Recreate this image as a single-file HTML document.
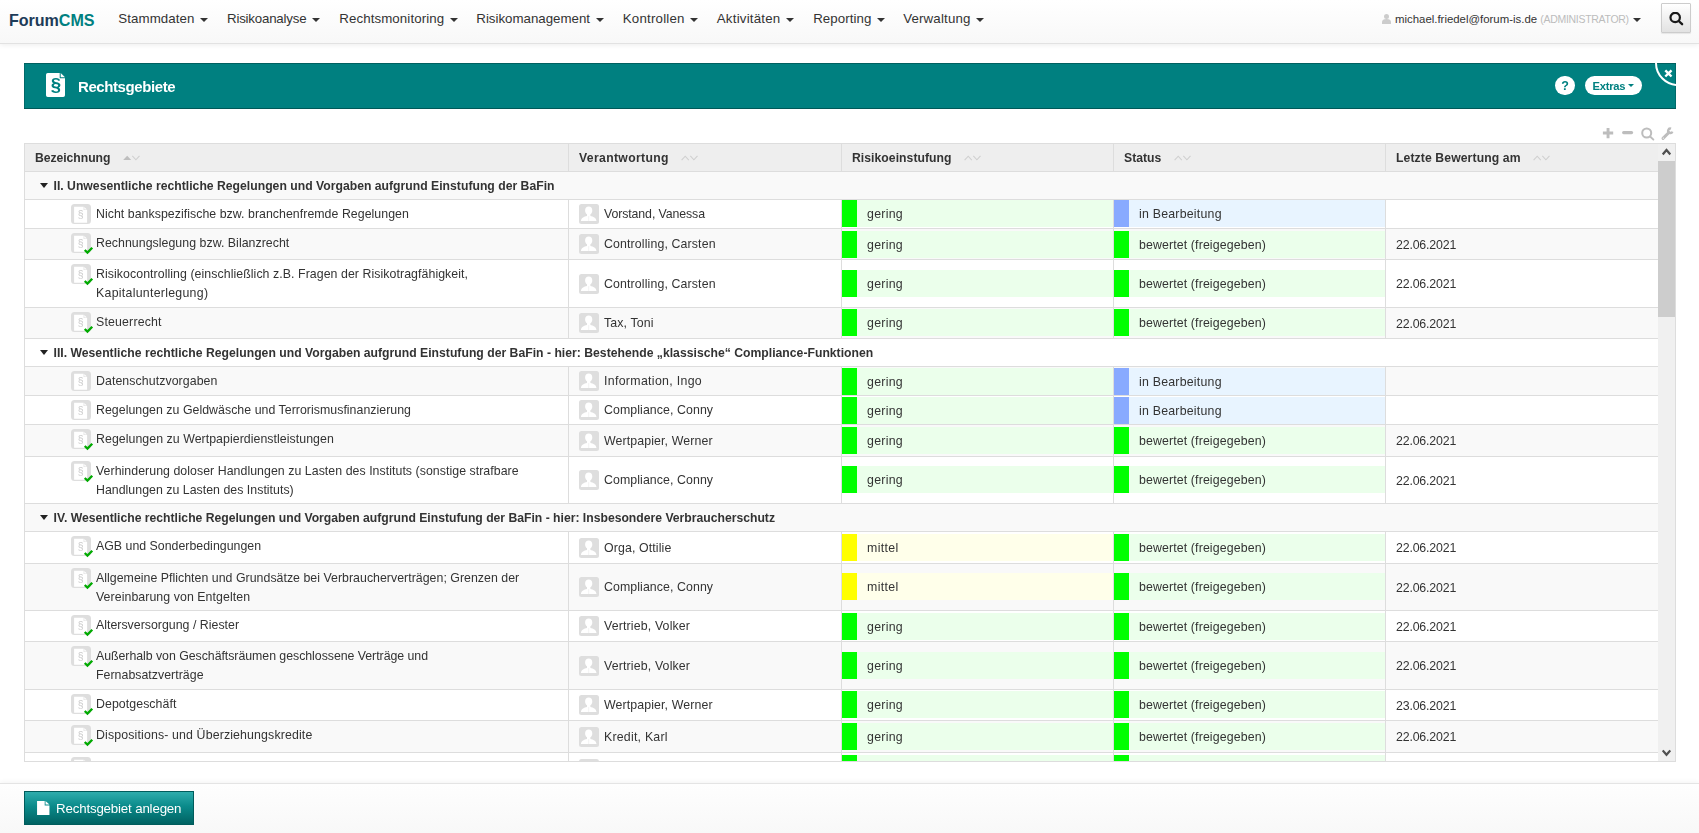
<!DOCTYPE html><html lang="de"><head><meta charset="utf-8"><title>ForumCMS - Rechtsgebiete</title><style>

html,body{margin:0;padding:0}
body{width:1699px;height:833px;overflow:hidden;background:#fff;position:relative;font-family:"Liberation Sans", sans-serif;font-size:12.35px;color:#333}
*{box-sizing:border-box}
.t{white-space:nowrap;display:inline-block}
.n{font-size:12.35px}
.b{font-size:12.2px;font-weight:bold}
.nav{font-size:13.3px}
#navbar{position:absolute;left:0;top:0;width:1699px;height:44px;background:linear-gradient(#ffffff,#f8f8f8);border-bottom:1px solid #e2e2e2;box-shadow:0 1px 5px rgba(0,0,0,.075)}
#brand{position:absolute;left:9px;top:8.5px;font-size:16.1px;letter-spacing:-0.05px;font-weight:bold;line-height:22px;white-space:nowrap}
#brand .bf{color:#1d3b59} #brand .bc{color:#008080}
.ni{position:absolute;top:9px;line-height:19px;white-space:nowrap;color:#333}
.caret{position:absolute;width:0;height:0;border-left:4px solid transparent;border-right:4px solid transparent;border-top:4px solid #333}
#user{position:absolute;top:11px;left:1395px;font-size:11.4px;line-height:16px;white-space:nowrap}
#user .adm{color:#bcbcbc;font-size:10.5px}
#sbtn{position:absolute;left:1661px;top:3px;width:30px;height:30px;border:1px solid #ccc;border-radius:1px;background:linear-gradient(#fff,#e2e2e2);box-shadow:0 1px 1px rgba(0,0,0,.08)}
#panel,#table,#footer{will-change:transform}
#panel{position:absolute;left:24px;top:63px;width:1652px;height:46px;background:#008080;overflow:hidden;box-shadow:inset 0 -1px 0 #005858,inset 0 1px 0 #006060,inset 1px 0 0 #006a6a,inset -1px 0 0 #006a6a}
#ptitle{position:absolute;left:54px;top:12.6px;color:#fff;font-weight:bold;font-size:15px;line-height:22px;white-space:nowrap}
#table{position:absolute;left:24px;top:143px;width:1652px;height:619px;border:1px solid #ddd;overflow:hidden;background:#fff}
.row{position:absolute;left:0;width:1633px;border-bottom:1px solid #ddd}
.odd{background:#f9f9f9}
.hd{background:#eee}
.c{position:absolute;top:0;bottom:0;border-right:1px solid #ddd}
.c1{left:0;width:544px} .c2{left:544px;width:273px} .c3{left:817px;width:272px} .c4{left:1089px;width:272px} .c5{left:1361px;width:272px;border-right:0}
.mid{display:flex;align-items:center}
.ic{position:absolute;left:46.3px;top:4px}
.ck{position:absolute;left:58px;top:16px}
.l{position:absolute;left:71px;line-height:16px}
.av{position:absolute;left:10px;top:50%;margin-top:-10px}
.nm{position:absolute;left:35px;top:50%;margin-top:-8px;line-height:16px}
.blk{position:absolute;left:0;right:0;height:27px}
.blk i{position:absolute;left:0;top:0;width:15px;height:27px}
.blk .t{position:absolute;left:25px;top:5.5px;line-height:16px}
.gr{background:#ebffeb} .gr i{background:#00ff00}
.ye{background:#ffffea} .ye i{background:#ffff00}
.bl{background:#e8f4ff} .bl i{background:#88aaff}
.dt{position:absolute;left:10px;top:50%;margin-top:-7.5px;line-height:16px}
.ht{position:absolute;left:10px;top:6px;line-height:16px}
.gt{position:absolute;left:28.5px;top:6.2px;line-height:16px}
.gc{position:absolute;left:15px;top:11.4px;width:0;height:0;border-left:4px solid transparent;border-right:4px solid transparent;border-top:5px solid #222}
.so{position:absolute;top:11px}
#sb{position:absolute;left:1633px;top:0;width:17px;height:617px;background:#f0f0f0}
#sb .th{position:absolute;left:0;top:17px;width:17px;height:156px;background:#cdcdcd}
#footer{position:absolute;left:0;top:783px;width:1699px;height:50px;border-top:1px solid #e4e4e4;background:linear-gradient(#fefefe,#f8f8f8);box-shadow:0 -1px 5px rgba(0,0,0,.05)}
#btn{position:absolute;left:24px;top:7px;width:170px;height:34px;border:1px solid #005c5c;background:linear-gradient(#2eacac,#0a8a8a 45%,#006262);color:#fff;font-size:13.3px;line-height:34px;white-space:nowrap}

</style></head><body>
<div id="navbar">
<div id="brand"><span class="bf">Forum</span><span class="bc">CMS</span></div>
<div class="ni" style="left:118.3px"><span class="t nav" style="letter-spacing:0.090px;">Stammdaten</span></div>
<div class="caret" style="left:200.0px;top:18px"></div>
<div class="ni" style="left:227.0px"><span class="t nav" style="letter-spacing:-0.204px;">Risikoanalyse</span></div>
<div class="caret" style="left:312.1px;top:18px"></div>
<div class="ni" style="left:339.2px"><span class="t nav" style="letter-spacing:0.102px;">Rechtsmonitoring</span></div>
<div class="caret" style="left:449.7px;top:18px"></div>
<div class="ni" style="left:476.3px"><span class="t nav" style="letter-spacing:-0.009px;">Risikomanagement</span></div>
<div class="caret" style="left:595.5px;top:18px"></div>
<div class="ni" style="left:622.8px"><span class="t nav" style="letter-spacing:0.203px;">Kontrollen</span></div>
<div class="caret" style="left:690.0px;top:18px"></div>
<div class="ni" style="left:716.8px"><span class="t nav" style="letter-spacing:0.206px;">Aktivitäten</span></div>
<div class="caret" style="left:785.7px;top:18px"></div>
<div class="ni" style="left:813.2px"><span class="t nav" style="letter-spacing:0.068px;">Reporting</span></div>
<div class="caret" style="left:876.9px;top:18px"></div>
<div class="ni" style="left:903.2px"><span class="t nav" style="letter-spacing:0.156px;">Verwaltung</span></div>
<div class="caret" style="left:975.9px;top:18px"></div>
<svg style="position:absolute;left:1382px;top:14px" width="9" height="10" viewBox="0 0 9 10"><circle cx="4.5" cy="2.6" r="2.5" fill="#ccc"/><path d="M0 10v-2.2c0-1.8 1.6-2.9 4.5-2.9s4.5 1.1 4.5 2.9v2.2z" fill="#ccc"/></svg>
<div id="user"><span class="t em" style="letter-spacing:0.004px;">michael.friedel@forum-is.de</span> <span class="adm"><span class="t em" style="letter-spacing:-0.297px;">(ADMINISTRATOR)</span></span></div>
<div class="caret" style="left:1633px;top:18px"></div>
<div id="sbtn"><svg style="position:absolute;left:7px;top:8px" width="15" height="15" viewBox="0 0 15 15"><circle cx="6.2" cy="5.5" r="4.7" fill="none" stroke="#1a1a1a" stroke-width="2.2"/><path d="M9.7 9l3.4 3.2" stroke="#1a1a1a" stroke-width="2.4" stroke-linecap="round"/></svg></div>
</div>
<div id="panel">
<svg style="position:absolute;left:22px;top:10px" width="19" height="24" viewBox="0 0 19 24"><path d="M1.8 0h11.9v5.2h5.3v17a1.8 1.8 0 0 1-1.8 1.8h-15.4a1.8 1.8 0 0 1-1.8-1.8v-20.4a1.8 1.8 0 0 1 1.8-1.8z" fill="#fff"/><path d="M14.7 0v4.3h4.3z" fill="#fff"/><text x="10" y="17.8" font-family="Liberation Sans" font-weight="bold" font-size="18.6" text-anchor="middle" fill="#008080">§</text></svg>
<div id="ptitle"><span class="t pt" style="letter-spacing:-0.412px;">Rechtsgebiete</span></div>
<div style="position:absolute;left:1531px;top:13px;width:20px;height:19px;padding-top:1px;border-radius:10px;background:#fff;color:#008080;font-weight:bold;font-size:12.5px;line-height:19.5px;text-align:center">?</div>
<div style="position:absolute;left:1561px;top:13px;width:57px;height:19px;border-radius:9.5px;background:#fff;color:#008080;font-weight:bold;font-size:11.2px;line-height:20px;padding-left:7.6px;white-space:nowrap"><span class="t ex" style="letter-spacing:-0.284px;">Extras</span></div>
<div class="caret" style="left:1603.8px;top:21.4px;border-top-color:#008080;border-left-width:3.6px;border-right-width:3.6px;border-top-width:3.6px"></div>
<div style="position:absolute;left:1631px;top:-23px;width:46px;height:46px;border-radius:23px;border:2px solid #fff;"></div>
<svg style="position:absolute;left:1639.5px;top:6.3px" width="9" height="9" viewBox="0 0 9 9"><path d="M1.3 1.3l6.2 6.2M7.5 1.3l-6.2 6.2" stroke="#fff" stroke-width="2.4"/></svg>
</div>
<svg style="position:absolute;left:1602px;top:127px" width="74" height="14" viewBox="0 0 74 14"><path d="M0.9 6h10.3M6.05 0.9v10.3" stroke="#bdbdbd" stroke-width="2.9"/><path d="M21.6 5.6h8" stroke="#bdbdbd" stroke-width="3.1" stroke-linecap="round"/><circle cx="44.7" cy="6" r="4.5" fill="none" stroke="#bdbdbd" stroke-width="2"/><path d="M48.1 9.5l3.3 3.1" stroke="#bdbdbd" stroke-width="1.9" stroke-linecap="round"/><path d="M61 11.4l5.9-5.9" stroke="#bdbdbd" stroke-width="3" stroke-linecap="round"/><path d="M70.4 4.6A2.2 2.2 0 1 1 69.05 1.7" fill="none" stroke="#bdbdbd" stroke-width="2.4"/><circle cx="61.3" cy="11.1" r=".6" fill="#fff"/></svg>
<div id="table">
<div class="row hd" style="top:0;height:28px">
<div class="c c1"><div class="ht"><span class="t b" style="letter-spacing:-0.044px;">Bezeichnung</span></div><svg class="so" style="left:97.9px" width="17" height="6" viewBox="0 0 17 6"><path d="M0.2 5.1l4-4.4l4 4.4z" fill="#bebebe"/><path d="M9.3 0.8l3.6 4l3.6-4" fill="none" stroke="#d0d0d0" stroke-width="1.1"/></svg></div>
<div class="c c2"><div class="ht"><span class="t b" style="letter-spacing:0.348px;">Verantwortung</span></div><svg class="so" style="left:112.0px" width="17" height="6" viewBox="0 0 17 6"><path d="M0.6 5.2l3.6-4l3.6 4M9.3 0.8l3.6 4l3.6-4" fill="none" stroke="#d0d0d0" stroke-width="1.1"/></svg></div>
<div class="c c3"><div class="ht"><span class="t b" style="letter-spacing:0.043px;">Risikoeinstufung</span></div><svg class="so" style="left:122.0px" width="17" height="6" viewBox="0 0 17 6"><path d="M0.6 5.2l3.6-4l3.6 4M9.3 0.8l3.6 4l3.6-4" fill="none" stroke="#d0d0d0" stroke-width="1.1"/></svg></div>
<div class="c c4"><div class="ht"><span class="t b" style="letter-spacing:0.000px;">Status</span></div><svg class="so" style="left:59.8px" width="17" height="6" viewBox="0 0 17 6"><path d="M0.6 5.2l3.6-4l3.6 4M9.3 0.8l3.6 4l3.6-4" fill="none" stroke="#d0d0d0" stroke-width="1.1"/></svg></div>
<div class="c c5"><div class="ht"><span class="t b" style="letter-spacing:0.107px;">Letzte Bewertung am</span></div><svg class="so" style="left:147.0px" width="17" height="6" viewBox="0 0 17 6"><path d="M0.6 5.2l3.6-4l3.6 4M9.3 0.8l3.6 4l3.6-4" fill="none" stroke="#d0d0d0" stroke-width="1.1"/></svg></div>
</div>
<div class="row odd" style="top:28px;height:28px"><div class="gc"></div><div class="gt"><span class="t b" style="letter-spacing:0.010px;">II. Unwesentliche rechtliche Regelungen und Vorgaben aufgrund Einstufung der BaFin</span></div></div>
<div class="row" style="top:56px;height:29px">
<div class="c c1"><svg class="ic" width="20" height="20" viewBox="0 0 20 20"><rect width="20" height="20" rx="3.5" fill="#dedede"/><path d="M3.1 2.7h9.5v3.4h3.5v12.6h-13z" fill="#fff"/><path d="M13.3 2.9l2.6 2.5h-2.6z" fill="#fff"/><text x="9.6" y="13.5" font-family="Liberation Sans" font-size="10.4" text-anchor="middle" fill="#cbcbcb">§</text></svg>
<div class="l" style="top:5.6px"><span class="t n" style="letter-spacing:0.039px;">Nicht bankspezifische bzw. branchenfremde Regelungen</span></div>
</div>
<div class="c c2"><svg class="av" width="20" height="20" viewBox="0 0 20 20"><rect width="20" height="20" rx="2.5" fill="#dedede"/><path d="M9.7 2.6c2.2 0 3.6 1.6 3.6 3.8c0 1.6-.8 3.1-1.9 3.9v1.6c2.8.7 5.6 1.4 6.1 5.1h-15.6c.5-3.7 3.3-4.4 6.1-5.1v-1.6c-1.1-.8-1.9-2.3-1.9-3.9c0-2.2 1.4-3.8 3.6-3.8z" fill="#fff"/><path d="M9.7 12.2v4.8" stroke="#efefef" stroke-width=".8"/></svg><div class="nm"><span class="t n" style="letter-spacing:-0.106px;">Vorstand, Vanessa</span></div></div>
<div class="c c3"><div class="blk gr" style="top:0px"><i></i><span class="t n" style="letter-spacing:0.284px;">gering</span></div></div>
<div class="c c4"><div class="blk bl" style="top:0px"><i></i><span class="t n" style="letter-spacing:0.222px;">in Bearbeitung</span></div></div>
<div class="c c5"></div>
</div>
<div class="row odd" style="top:85px;height:31px">
<div class="c c1"><svg class="ic" width="20" height="20" viewBox="0 0 20 20"><rect width="20" height="20" rx="3.5" fill="#dedede"/><path d="M3.1 2.7h9.5v3.4h3.5v12.6h-13z" fill="#fff"/><path d="M13.3 2.9l2.6 2.5h-2.6z" fill="#fff"/><text x="9.6" y="13.5" font-family="Liberation Sans" font-size="10.4" text-anchor="middle" fill="#cbcbcb">§</text></svg><svg class="ck" width="12" height="10" viewBox="0 0 12 10"><path d="M1.75 5.0L4.45 7.6L9.25 2.8" fill="none" stroke="#0a0" stroke-width="2.3" stroke-linecap="butt" stroke-linejoin="miter"/></svg>
<div class="l" style="top:5.6px"><span class="t n" style="letter-spacing:0.037px;">Rechnungslegung bzw. Bilanzrecht</span></div>
</div>
<div class="c c2"><svg class="av" width="20" height="20" viewBox="0 0 20 20"><rect width="20" height="20" rx="2.5" fill="#dedede"/><path d="M9.7 2.6c2.2 0 3.6 1.6 3.6 3.8c0 1.6-.8 3.1-1.9 3.9v1.6c2.8.7 5.6 1.4 6.1 5.1h-15.6c.5-3.7 3.3-4.4 6.1-5.1v-1.6c-1.1-.8-1.9-2.3-1.9-3.9c0-2.2 1.4-3.8 3.6-3.8z" fill="#fff"/><path d="M9.7 12.2v4.8" stroke="#efefef" stroke-width=".8"/></svg><div class="nm"><span class="t n" style="letter-spacing:0.127px;">Controlling, Carsten</span></div></div>
<div class="c c3"><div class="blk gr" style="top:2px"><i></i><span class="t n" style="letter-spacing:0.284px;">gering</span></div></div>
<div class="c c4"><div class="blk gr" style="top:2px"><i></i><span class="t n" style="letter-spacing:0.121px;">bewertet (freigegeben)</span></div></div>
<div class="c c5"><div class="dt"><span class="t n" style="letter-spacing:-0.170px;">22.06.2021</span></div></div>
</div>
<div class="row" style="top:116px;height:48px">
<div class="c c1"><svg class="ic" width="20" height="20" viewBox="0 0 20 20"><rect width="20" height="20" rx="3.5" fill="#dedede"/><path d="M3.1 2.7h9.5v3.4h3.5v12.6h-13z" fill="#fff"/><path d="M13.3 2.9l2.6 2.5h-2.6z" fill="#fff"/><text x="9.6" y="13.5" font-family="Liberation Sans" font-size="10.4" text-anchor="middle" fill="#cbcbcb">§</text></svg><svg class="ck" width="12" height="10" viewBox="0 0 12 10"><path d="M1.75 5.0L4.45 7.6L9.25 2.8" fill="none" stroke="#0a0" stroke-width="2.3" stroke-linecap="butt" stroke-linejoin="miter"/></svg>
<div class="l" style="top:5.6px"><span class="t n" style="letter-spacing:0.062px;">Risikocontrolling (einschließlich z.B. Fragen der Risikotragfähigkeit,</span></div>
<div class="l" style="top:24.6px"><span class="t n" style="letter-spacing:0.274px;">Kapitalunterlegung)</span></div>
</div>
<div class="c c2"><svg class="av" width="20" height="20" viewBox="0 0 20 20"><rect width="20" height="20" rx="2.5" fill="#dedede"/><path d="M9.7 2.6c2.2 0 3.6 1.6 3.6 3.8c0 1.6-.8 3.1-1.9 3.9v1.6c2.8.7 5.6 1.4 6.1 5.1h-15.6c.5-3.7 3.3-4.4 6.1-5.1v-1.6c-1.1-.8-1.9-2.3-1.9-3.9c0-2.2 1.4-3.8 3.6-3.8z" fill="#fff"/><path d="M9.7 12.2v4.8" stroke="#efefef" stroke-width=".8"/></svg><div class="nm"><span class="t n" style="letter-spacing:0.127px;">Controlling, Carsten</span></div></div>
<div class="c c3"><div class="blk gr" style="top:10px"><i></i><span class="t n" style="letter-spacing:0.284px;">gering</span></div></div>
<div class="c c4"><div class="blk gr" style="top:10px"><i></i><span class="t n" style="letter-spacing:0.121px;">bewertet (freigegeben)</span></div></div>
<div class="c c5"><div class="dt"><span class="t n" style="letter-spacing:-0.170px;">22.06.2021</span></div></div>
</div>
<div class="row odd" style="top:164px;height:31px">
<div class="c c1"><svg class="ic" width="20" height="20" viewBox="0 0 20 20"><rect width="20" height="20" rx="3.5" fill="#dedede"/><path d="M3.1 2.7h9.5v3.4h3.5v12.6h-13z" fill="#fff"/><path d="M13.3 2.9l2.6 2.5h-2.6z" fill="#fff"/><text x="9.6" y="13.5" font-family="Liberation Sans" font-size="10.4" text-anchor="middle" fill="#cbcbcb">§</text></svg><svg class="ck" width="12" height="10" viewBox="0 0 12 10"><path d="M1.75 5.0L4.45 7.6L9.25 2.8" fill="none" stroke="#0a0" stroke-width="2.3" stroke-linecap="butt" stroke-linejoin="miter"/></svg>
<div class="l" style="top:5.6px"><span class="t n" style="letter-spacing:0.169px;">Steuerrecht</span></div>
</div>
<div class="c c2"><svg class="av" width="20" height="20" viewBox="0 0 20 20"><rect width="20" height="20" rx="2.5" fill="#dedede"/><path d="M9.7 2.6c2.2 0 3.6 1.6 3.6 3.8c0 1.6-.8 3.1-1.9 3.9v1.6c2.8.7 5.6 1.4 6.1 5.1h-15.6c.5-3.7 3.3-4.4 6.1-5.1v-1.6c-1.1-.8-1.9-2.3-1.9-3.9c0-2.2 1.4-3.8 3.6-3.8z" fill="#fff"/><path d="M9.7 12.2v4.8" stroke="#efefef" stroke-width=".8"/></svg><div class="nm"><span class="t n" style="letter-spacing:0.125px;">Tax, Toni</span></div></div>
<div class="c c3"><div class="blk gr" style="top:1px"><i></i><span class="t n" style="letter-spacing:0.284px;">gering</span></div></div>
<div class="c c4"><div class="blk gr" style="top:1px"><i></i><span class="t n" style="letter-spacing:0.121px;">bewertet (freigegeben)</span></div></div>
<div class="c c5"><div class="dt"><span class="t n" style="letter-spacing:-0.170px;">22.06.2021</span></div></div>
</div>
<div class="row" style="top:195px;height:28px"><div class="gc"></div><div class="gt"><span class="t b" style="letter-spacing:0.011px;">III. Wesentliche rechtliche Regelungen und Vorgaben aufgrund Einstufung der BaFin - hier: Bestehende „klassische“ Compliance-Funktionen</span></div></div>
<div class="row odd" style="top:223px;height:29px">
<div class="c c1"><svg class="ic" width="20" height="20" viewBox="0 0 20 20"><rect width="20" height="20" rx="3.5" fill="#dedede"/><path d="M3.1 2.7h9.5v3.4h3.5v12.6h-13z" fill="#fff"/><path d="M13.3 2.9l2.6 2.5h-2.6z" fill="#fff"/><text x="9.6" y="13.5" font-family="Liberation Sans" font-size="10.4" text-anchor="middle" fill="#cbcbcb">§</text></svg>
<div class="l" style="top:5.6px"><span class="t n" style="letter-spacing:0.073px;">Datenschutzvorgaben</span></div>
</div>
<div class="c c2"><svg class="av" width="20" height="20" viewBox="0 0 20 20"><rect width="20" height="20" rx="2.5" fill="#dedede"/><path d="M9.7 2.6c2.2 0 3.6 1.6 3.6 3.8c0 1.6-.8 3.1-1.9 3.9v1.6c2.8.7 5.6 1.4 6.1 5.1h-15.6c.5-3.7 3.3-4.4 6.1-5.1v-1.6c-1.1-.8-1.9-2.3-1.9-3.9c0-2.2 1.4-3.8 3.6-3.8z" fill="#fff"/><path d="M9.7 12.2v4.8" stroke="#efefef" stroke-width=".8"/></svg><div class="nm"><span class="t n" style="letter-spacing:0.319px;">Information, Ingo</span></div></div>
<div class="c c3"><div class="blk gr" style="top:1px"><i></i><span class="t n" style="letter-spacing:0.284px;">gering</span></div></div>
<div class="c c4"><div class="blk bl" style="top:1px"><i></i><span class="t n" style="letter-spacing:0.222px;">in Bearbeitung</span></div></div>
<div class="c c5"></div>
</div>
<div class="row" style="top:252px;height:29px">
<div class="c c1"><svg class="ic" width="20" height="20" viewBox="0 0 20 20"><rect width="20" height="20" rx="3.5" fill="#dedede"/><path d="M3.1 2.7h9.5v3.4h3.5v12.6h-13z" fill="#fff"/><path d="M13.3 2.9l2.6 2.5h-2.6z" fill="#fff"/><text x="9.6" y="13.5" font-family="Liberation Sans" font-size="10.4" text-anchor="middle" fill="#cbcbcb">§</text></svg>
<div class="l" style="top:5.6px"><span class="t n" style="letter-spacing:0.032px;">Regelungen zu Geldwäsche und Terrorismusfinanzierung</span></div>
</div>
<div class="c c2"><svg class="av" width="20" height="20" viewBox="0 0 20 20"><rect width="20" height="20" rx="2.5" fill="#dedede"/><path d="M9.7 2.6c2.2 0 3.6 1.6 3.6 3.8c0 1.6-.8 3.1-1.9 3.9v1.6c2.8.7 5.6 1.4 6.1 5.1h-15.6c.5-3.7 3.3-4.4 6.1-5.1v-1.6c-1.1-.8-1.9-2.3-1.9-3.9c0-2.2 1.4-3.8 3.6-3.8z" fill="#fff"/><path d="M9.7 12.2v4.8" stroke="#efefef" stroke-width=".8"/></svg><div class="nm"><span class="t n" style="letter-spacing:0.080px;">Compliance, Conny</span></div></div>
<div class="c c3"><div class="blk gr" style="top:1px"><i></i><span class="t n" style="letter-spacing:0.284px;">gering</span></div></div>
<div class="c c4"><div class="blk bl" style="top:1px"><i></i><span class="t n" style="letter-spacing:0.222px;">in Bearbeitung</span></div></div>
<div class="c c5"></div>
</div>
<div class="row odd" style="top:281px;height:32px">
<div class="c c1"><svg class="ic" width="20" height="20" viewBox="0 0 20 20"><rect width="20" height="20" rx="3.5" fill="#dedede"/><path d="M3.1 2.7h9.5v3.4h3.5v12.6h-13z" fill="#fff"/><path d="M13.3 2.9l2.6 2.5h-2.6z" fill="#fff"/><text x="9.6" y="13.5" font-family="Liberation Sans" font-size="10.4" text-anchor="middle" fill="#cbcbcb">§</text></svg><svg class="ck" width="12" height="10" viewBox="0 0 12 10"><path d="M1.75 5.0L4.45 7.6L9.25 2.8" fill="none" stroke="#0a0" stroke-width="2.3" stroke-linecap="butt" stroke-linejoin="miter"/></svg>
<div class="l" style="top:5.6px"><span class="t n" style="letter-spacing:0.050px;">Regelungen zu Wertpapierdienstleistungen</span></div>
</div>
<div class="c c2"><svg class="av" width="20" height="20" viewBox="0 0 20 20"><rect width="20" height="20" rx="2.5" fill="#dedede"/><path d="M9.7 2.6c2.2 0 3.6 1.6 3.6 3.8c0 1.6-.8 3.1-1.9 3.9v1.6c2.8.7 5.6 1.4 6.1 5.1h-15.6c.5-3.7 3.3-4.4 6.1-5.1v-1.6c-1.1-.8-1.9-2.3-1.9-3.9c0-2.2 1.4-3.8 3.6-3.8z" fill="#fff"/><path d="M9.7 12.2v4.8" stroke="#efefef" stroke-width=".8"/></svg><div class="nm"><span class="t n" style="letter-spacing:0.113px;">Wertpapier, Werner</span></div></div>
<div class="c c3"><div class="blk gr" style="top:2px"><i></i><span class="t n" style="letter-spacing:0.284px;">gering</span></div></div>
<div class="c c4"><div class="blk gr" style="top:2px"><i></i><span class="t n" style="letter-spacing:0.121px;">bewertet (freigegeben)</span></div></div>
<div class="c c5"><div class="dt"><span class="t n" style="letter-spacing:-0.170px;">22.06.2021</span></div></div>
</div>
<div class="row" style="top:313px;height:47px">
<div class="c c1"><svg class="ic" width="20" height="20" viewBox="0 0 20 20"><rect width="20" height="20" rx="3.5" fill="#dedede"/><path d="M3.1 2.7h9.5v3.4h3.5v12.6h-13z" fill="#fff"/><path d="M13.3 2.9l2.6 2.5h-2.6z" fill="#fff"/><text x="9.6" y="13.5" font-family="Liberation Sans" font-size="10.4" text-anchor="middle" fill="#cbcbcb">§</text></svg><svg class="ck" width="12" height="10" viewBox="0 0 12 10"><path d="M1.75 5.0L4.45 7.6L9.25 2.8" fill="none" stroke="#0a0" stroke-width="2.3" stroke-linecap="butt" stroke-linejoin="miter"/></svg>
<div class="l" style="top:5.6px"><span class="t n" style="letter-spacing:0.045px;">Verhinderung doloser Handlungen zu Lasten des Instituts (sonstige strafbare</span></div>
<div class="l" style="top:24.6px"><span class="t n" style="letter-spacing:0.022px;">Handlungen zu Lasten des Instituts)</span></div>
</div>
<div class="c c2"><svg class="av" width="20" height="20" viewBox="0 0 20 20"><rect width="20" height="20" rx="2.5" fill="#dedede"/><path d="M9.7 2.6c2.2 0 3.6 1.6 3.6 3.8c0 1.6-.8 3.1-1.9 3.9v1.6c2.8.7 5.6 1.4 6.1 5.1h-15.6c.5-3.7 3.3-4.4 6.1-5.1v-1.6c-1.1-.8-1.9-2.3-1.9-3.9c0-2.2 1.4-3.8 3.6-3.8z" fill="#fff"/><path d="M9.7 12.2v4.8" stroke="#efefef" stroke-width=".8"/></svg><div class="nm"><span class="t n" style="letter-spacing:0.080px;">Compliance, Conny</span></div></div>
<div class="c c3"><div class="blk gr" style="top:9px"><i></i><span class="t n" style="letter-spacing:0.284px;">gering</span></div></div>
<div class="c c4"><div class="blk gr" style="top:9px"><i></i><span class="t n" style="letter-spacing:0.121px;">bewertet (freigegeben)</span></div></div>
<div class="c c5"><div class="dt"><span class="t n" style="letter-spacing:-0.170px;">22.06.2021</span></div></div>
</div>
<div class="row odd" style="top:360px;height:28px"><div class="gc"></div><div class="gt"><span class="t b" style="letter-spacing:-0.007px;">IV. Wesentliche rechtliche Regelungen und Vorgaben aufgrund Einstufung der BaFin - hier: Insbesondere Verbraucherschutz</span></div></div>
<div class="row" style="top:388px;height:32px">
<div class="c c1"><svg class="ic" width="20" height="20" viewBox="0 0 20 20"><rect width="20" height="20" rx="3.5" fill="#dedede"/><path d="M3.1 2.7h9.5v3.4h3.5v12.6h-13z" fill="#fff"/><path d="M13.3 2.9l2.6 2.5h-2.6z" fill="#fff"/><text x="9.6" y="13.5" font-family="Liberation Sans" font-size="10.4" text-anchor="middle" fill="#cbcbcb">§</text></svg><svg class="ck" width="12" height="10" viewBox="0 0 12 10"><path d="M1.75 5.0L4.45 7.6L9.25 2.8" fill="none" stroke="#0a0" stroke-width="2.3" stroke-linecap="butt" stroke-linejoin="miter"/></svg>
<div class="l" style="top:5.6px"><span class="t n" style="letter-spacing:0.012px;">AGB und Sonderbedingungen</span></div>
</div>
<div class="c c2"><svg class="av" width="20" height="20" viewBox="0 0 20 20"><rect width="20" height="20" rx="2.5" fill="#dedede"/><path d="M9.7 2.6c2.2 0 3.6 1.6 3.6 3.8c0 1.6-.8 3.1-1.9 3.9v1.6c2.8.7 5.6 1.4 6.1 5.1h-15.6c.5-3.7 3.3-4.4 6.1-5.1v-1.6c-1.1-.8-1.9-2.3-1.9-3.9c0-2.2 1.4-3.8 3.6-3.8z" fill="#fff"/><path d="M9.7 12.2v4.8" stroke="#efefef" stroke-width=".8"/></svg><div class="nm"><span class="t n" style="letter-spacing:0.116px;">Orga, Ottilie</span></div></div>
<div class="c c3"><div class="blk ye" style="top:2px"><i></i><span class="t n" style="letter-spacing:0.350px;">mittel</span></div></div>
<div class="c c4"><div class="blk gr" style="top:2px"><i></i><span class="t n" style="letter-spacing:0.121px;">bewertet (freigegeben)</span></div></div>
<div class="c c5"><div class="dt"><span class="t n" style="letter-spacing:-0.170px;">22.06.2021</span></div></div>
</div>
<div class="row odd" style="top:420px;height:47px">
<div class="c c1"><svg class="ic" width="20" height="20" viewBox="0 0 20 20"><rect width="20" height="20" rx="3.5" fill="#dedede"/><path d="M3.1 2.7h9.5v3.4h3.5v12.6h-13z" fill="#fff"/><path d="M13.3 2.9l2.6 2.5h-2.6z" fill="#fff"/><text x="9.6" y="13.5" font-family="Liberation Sans" font-size="10.4" text-anchor="middle" fill="#cbcbcb">§</text></svg><svg class="ck" width="12" height="10" viewBox="0 0 12 10"><path d="M1.75 5.0L4.45 7.6L9.25 2.8" fill="none" stroke="#0a0" stroke-width="2.3" stroke-linecap="butt" stroke-linejoin="miter"/></svg>
<div class="l" style="top:5.6px"><span class="t n" style="letter-spacing:0.026px;">Allgemeine Pflichten und Grundsätze bei Verbraucherverträgen; Grenzen der</span></div>
<div class="l" style="top:24.6px"><span class="t n" style="letter-spacing:0.066px;">Vereinbarung von Entgelten</span></div>
</div>
<div class="c c2"><svg class="av" width="20" height="20" viewBox="0 0 20 20"><rect width="20" height="20" rx="2.5" fill="#dedede"/><path d="M9.7 2.6c2.2 0 3.6 1.6 3.6 3.8c0 1.6-.8 3.1-1.9 3.9v1.6c2.8.7 5.6 1.4 6.1 5.1h-15.6c.5-3.7 3.3-4.4 6.1-5.1v-1.6c-1.1-.8-1.9-2.3-1.9-3.9c0-2.2 1.4-3.8 3.6-3.8z" fill="#fff"/><path d="M9.7 12.2v4.8" stroke="#efefef" stroke-width=".8"/></svg><div class="nm"><span class="t n" style="letter-spacing:0.080px;">Compliance, Conny</span></div></div>
<div class="c c3"><div class="blk ye" style="top:9px"><i></i><span class="t n" style="letter-spacing:0.350px;">mittel</span></div></div>
<div class="c c4"><div class="blk gr" style="top:9px"><i></i><span class="t n" style="letter-spacing:0.121px;">bewertet (freigegeben)</span></div></div>
<div class="c c5"><div class="dt"><span class="t n" style="letter-spacing:-0.170px;">22.06.2021</span></div></div>
</div>
<div class="row" style="top:467px;height:31px">
<div class="c c1"><svg class="ic" width="20" height="20" viewBox="0 0 20 20"><rect width="20" height="20" rx="3.5" fill="#dedede"/><path d="M3.1 2.7h9.5v3.4h3.5v12.6h-13z" fill="#fff"/><path d="M13.3 2.9l2.6 2.5h-2.6z" fill="#fff"/><text x="9.6" y="13.5" font-family="Liberation Sans" font-size="10.4" text-anchor="middle" fill="#cbcbcb">§</text></svg><svg class="ck" width="12" height="10" viewBox="0 0 12 10"><path d="M1.75 5.0L4.45 7.6L9.25 2.8" fill="none" stroke="#0a0" stroke-width="2.3" stroke-linecap="butt" stroke-linejoin="miter"/></svg>
<div class="l" style="top:5.6px"><span class="t n" style="letter-spacing:0.012px;">Altersversorgung / Riester</span></div>
</div>
<div class="c c2"><svg class="av" width="20" height="20" viewBox="0 0 20 20"><rect width="20" height="20" rx="2.5" fill="#dedede"/><path d="M9.7 2.6c2.2 0 3.6 1.6 3.6 3.8c0 1.6-.8 3.1-1.9 3.9v1.6c2.8.7 5.6 1.4 6.1 5.1h-15.6c.5-3.7 3.3-4.4 6.1-5.1v-1.6c-1.1-.8-1.9-2.3-1.9-3.9c0-2.2 1.4-3.8 3.6-3.8z" fill="#fff"/><path d="M9.7 12.2v4.8" stroke="#efefef" stroke-width=".8"/></svg><div class="nm"><span class="t n" style="letter-spacing:0.152px;">Vertrieb, Volker</span></div></div>
<div class="c c3"><div class="blk gr" style="top:2px"><i></i><span class="t n" style="letter-spacing:0.284px;">gering</span></div></div>
<div class="c c4"><div class="blk gr" style="top:2px"><i></i><span class="t n" style="letter-spacing:0.121px;">bewertet (freigegeben)</span></div></div>
<div class="c c5"><div class="dt"><span class="t n" style="letter-spacing:-0.170px;">22.06.2021</span></div></div>
</div>
<div class="row odd" style="top:498px;height:48px">
<div class="c c1"><svg class="ic" width="20" height="20" viewBox="0 0 20 20"><rect width="20" height="20" rx="3.5" fill="#dedede"/><path d="M3.1 2.7h9.5v3.4h3.5v12.6h-13z" fill="#fff"/><path d="M13.3 2.9l2.6 2.5h-2.6z" fill="#fff"/><text x="9.6" y="13.5" font-family="Liberation Sans" font-size="10.4" text-anchor="middle" fill="#cbcbcb">§</text></svg><svg class="ck" width="12" height="10" viewBox="0 0 12 10"><path d="M1.75 5.0L4.45 7.6L9.25 2.8" fill="none" stroke="#0a0" stroke-width="2.3" stroke-linecap="butt" stroke-linejoin="miter"/></svg>
<div class="l" style="top:5.6px"><span class="t n" style="letter-spacing:-0.040px;">Außerhalb von Geschäftsräumen geschlossene Verträge und</span></div>
<div class="l" style="top:24.6px"><span class="t n" style="letter-spacing:0.027px;">Fernabsatzverträge</span></div>
</div>
<div class="c c2"><svg class="av" width="20" height="20" viewBox="0 0 20 20"><rect width="20" height="20" rx="2.5" fill="#dedede"/><path d="M9.7 2.6c2.2 0 3.6 1.6 3.6 3.8c0 1.6-.8 3.1-1.9 3.9v1.6c2.8.7 5.6 1.4 6.1 5.1h-15.6c.5-3.7 3.3-4.4 6.1-5.1v-1.6c-1.1-.8-1.9-2.3-1.9-3.9c0-2.2 1.4-3.8 3.6-3.8z" fill="#fff"/><path d="M9.7 12.2v4.8" stroke="#efefef" stroke-width=".8"/></svg><div class="nm"><span class="t n" style="letter-spacing:0.152px;">Vertrieb, Volker</span></div></div>
<div class="c c3"><div class="blk gr" style="top:10px"><i></i><span class="t n" style="letter-spacing:0.284px;">gering</span></div></div>
<div class="c c4"><div class="blk gr" style="top:10px"><i></i><span class="t n" style="letter-spacing:0.121px;">bewertet (freigegeben)</span></div></div>
<div class="c c5"><div class="dt"><span class="t n" style="letter-spacing:-0.170px;">22.06.2021</span></div></div>
</div>
<div class="row" style="top:546px;height:31px">
<div class="c c1"><svg class="ic" width="20" height="20" viewBox="0 0 20 20"><rect width="20" height="20" rx="3.5" fill="#dedede"/><path d="M3.1 2.7h9.5v3.4h3.5v12.6h-13z" fill="#fff"/><path d="M13.3 2.9l2.6 2.5h-2.6z" fill="#fff"/><text x="9.6" y="13.5" font-family="Liberation Sans" font-size="10.4" text-anchor="middle" fill="#cbcbcb">§</text></svg><svg class="ck" width="12" height="10" viewBox="0 0 12 10"><path d="M1.75 5.0L4.45 7.6L9.25 2.8" fill="none" stroke="#0a0" stroke-width="2.3" stroke-linecap="butt" stroke-linejoin="miter"/></svg>
<div class="l" style="top:5.6px"><span class="t n" style="letter-spacing:0.066px;">Depotgeschäft</span></div>
</div>
<div class="c c2"><svg class="av" width="20" height="20" viewBox="0 0 20 20"><rect width="20" height="20" rx="2.5" fill="#dedede"/><path d="M9.7 2.6c2.2 0 3.6 1.6 3.6 3.8c0 1.6-.8 3.1-1.9 3.9v1.6c2.8.7 5.6 1.4 6.1 5.1h-15.6c.5-3.7 3.3-4.4 6.1-5.1v-1.6c-1.1-.8-1.9-2.3-1.9-3.9c0-2.2 1.4-3.8 3.6-3.8z" fill="#fff"/><path d="M9.7 12.2v4.8" stroke="#efefef" stroke-width=".8"/></svg><div class="nm"><span class="t n" style="letter-spacing:0.113px;">Wertpapier, Werner</span></div></div>
<div class="c c3"><div class="blk gr" style="top:1px"><i></i><span class="t n" style="letter-spacing:0.284px;">gering</span></div></div>
<div class="c c4"><div class="blk gr" style="top:1px"><i></i><span class="t n" style="letter-spacing:0.121px;">bewertet (freigegeben)</span></div></div>
<div class="c c5"><div class="dt"><span class="t n" style="letter-spacing:-0.170px;">23.06.2021</span></div></div>
</div>
<div class="row odd" style="top:577px;height:32px">
<div class="c c1"><svg class="ic" width="20" height="20" viewBox="0 0 20 20"><rect width="20" height="20" rx="3.5" fill="#dedede"/><path d="M3.1 2.7h9.5v3.4h3.5v12.6h-13z" fill="#fff"/><path d="M13.3 2.9l2.6 2.5h-2.6z" fill="#fff"/><text x="9.6" y="13.5" font-family="Liberation Sans" font-size="10.4" text-anchor="middle" fill="#cbcbcb">§</text></svg><svg class="ck" width="12" height="10" viewBox="0 0 12 10"><path d="M1.75 5.0L4.45 7.6L9.25 2.8" fill="none" stroke="#0a0" stroke-width="2.3" stroke-linecap="butt" stroke-linejoin="miter"/></svg>
<div class="l" style="top:5.6px"><span class="t n" style="letter-spacing:0.138px;">Dispositions- und Überziehungskredite</span></div>
</div>
<div class="c c2"><svg class="av" width="20" height="20" viewBox="0 0 20 20"><rect width="20" height="20" rx="2.5" fill="#dedede"/><path d="M9.7 2.6c2.2 0 3.6 1.6 3.6 3.8c0 1.6-.8 3.1-1.9 3.9v1.6c2.8.7 5.6 1.4 6.1 5.1h-15.6c.5-3.7 3.3-4.4 6.1-5.1v-1.6c-1.1-.8-1.9-2.3-1.9-3.9c0-2.2 1.4-3.8 3.6-3.8z" fill="#fff"/><path d="M9.7 12.2v4.8" stroke="#efefef" stroke-width=".8"/></svg><div class="nm"><span class="t n" style="letter-spacing:0.222px;">Kredit, Karl</span></div></div>
<div class="c c3"><div class="blk gr" style="top:2px"><i></i><span class="t n" style="letter-spacing:0.284px;">gering</span></div></div>
<div class="c c4"><div class="blk gr" style="top:2px"><i></i><span class="t n" style="letter-spacing:0.121px;">bewertet (freigegeben)</span></div></div>
<div class="c c5"><div class="dt"><span class="t n" style="letter-spacing:-0.170px;">22.06.2021</span></div></div>
</div>
<div class="row" style="top:609px;height:32px">
<div class="c c1"><svg class="ic" width="20" height="20" viewBox="0 0 20 20"><rect width="20" height="20" rx="3.5" fill="#dedede"/><path d="M3.1 2.7h9.5v3.4h3.5v12.6h-13z" fill="#fff"/><path d="M13.3 2.9l2.6 2.5h-2.6z" fill="#fff"/><text x="9.6" y="13.5" font-family="Liberation Sans" font-size="10.4" text-anchor="middle" fill="#cbcbcb">§</text></svg><svg class="ck" width="12" height="10" viewBox="0 0 12 10"><path d="M1.75 5.0L4.45 7.6L9.25 2.8" fill="none" stroke="#0a0" stroke-width="2.3" stroke-linecap="butt" stroke-linejoin="miter"/></svg>
</div>
<div class="c c2"><svg class="av" width="20" height="20" viewBox="0 0 20 20"><rect width="20" height="20" rx="2.5" fill="#dedede"/><path d="M9.7 2.6c2.2 0 3.6 1.6 3.6 3.8c0 1.6-.8 3.1-1.9 3.9v1.6c2.8.7 5.6 1.4 6.1 5.1h-15.6c.5-3.7 3.3-4.4 6.1-5.1v-1.6c-1.1-.8-1.9-2.3-1.9-3.9c0-2.2 1.4-3.8 3.6-3.8z" fill="#fff"/><path d="M9.7 12.2v4.8" stroke="#efefef" stroke-width=".8"/></svg></div>
<div class="c c3"><div class="blk gr" style="top:2px"><i></i><span class="t n" style="letter-spacing:0.284px;">gering</span></div></div>
<div class="c c4"><div class="blk gr" style="top:2px"><i></i><span class="t n" style="letter-spacing:0.121px;">bewertet (freigegeben)</span></div></div>
<div class="c c5"></div>
</div>
<div id="sb"><div class="th"></div><svg style="position:absolute;left:4px;top:4px" width="9" height="8" viewBox="0 0 9 8"><path d="M0.7 6.4l3.8-4.3l3.8 4.3" fill="none" stroke="#505050" stroke-width="2.3"/></svg><svg style="position:absolute;left:4px;top:605px" width="9" height="8" viewBox="0 0 9 8"><path d="M0.7 1.4l3.8 4.3l3.8-4.3" fill="none" stroke="#505050" stroke-width="2.3"/></svg></div>
</div>
<div id="footer"><div id="btn"><svg style="position:absolute;left:12px;top:9px" width="12.5" height="14.3" viewBox="0 0 13 15"><path d="M0 0h8v4.6h5v10.4h-13z" fill="#fff"/><path d="M8.9 0l4.1 3.7h-4.1z" fill="#fff"/></svg><div style="position:absolute;left:31px;top:0"><span class="t bt" style="letter-spacing:-0.165px;">Rechtsgebiet anlegen</span></div></div></div>
</body></html>
